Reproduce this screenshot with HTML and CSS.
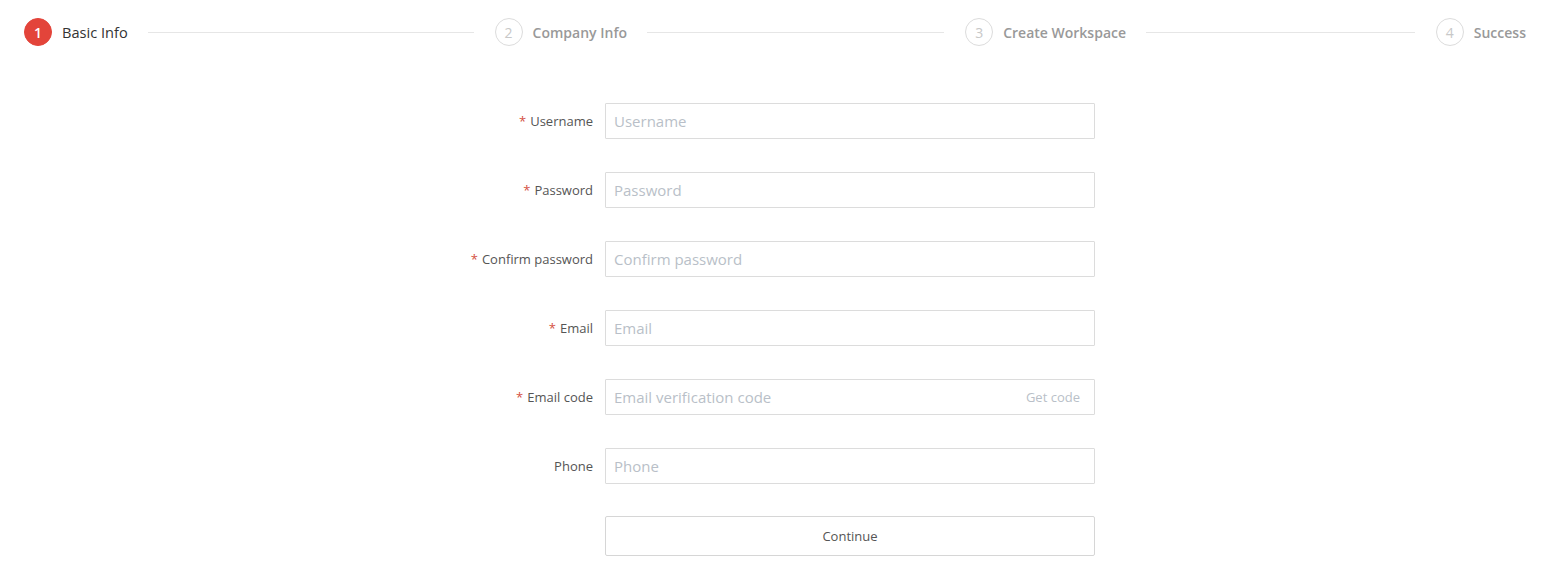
FILE: index.html
```html
<!DOCTYPE html>
<html>
<head>
<meta charset="utf-8">
<link rel="stylesheet" href="styles.css">
</head>
<body>
<div class="steps">
  <div class="step active">
    <span class="step-icon">1</span>
    <span class="step-title">Basic Info</span>
    <span class="step-line"></span>
  </div>
  <div class="step">
    <span class="step-icon">2</span>
    <span class="step-title">Company Info</span>
    <span class="step-line"></span>
  </div>
  <div class="step">
    <span class="step-icon">3</span>
    <span class="step-title">Create Workspace</span>
    <span class="step-line"></span>
  </div>
  <div class="step last">
    <span class="step-icon">4</span>
    <span class="step-title">Success</span>
  </div>
</div>

<form class="form">
  <label class="label"><span class="req">*</span>Username</label>
  <div class="field"><input class="input" placeholder="Username"></div>

  <label class="label"><span class="req">*</span>Password</label>
  <div class="field"><input class="input" type="password" placeholder="Password"></div>

  <label class="label"><span class="req">*</span>Confirm password</label>
  <div class="field"><input class="input" type="password" placeholder="Confirm password"></div>

  <label class="label"><span class="req">*</span>Email</label>
  <div class="field"><input class="input" placeholder="Email"></div>

  <label class="label"><span class="req">*</span>Email code</label>
  <div class="field code-field"><input class="input" placeholder="Email verification code"><span class="get-code">Get code</span></div>

  <label class="label">Phone</label>
  <div class="field"><input class="input" placeholder="Phone"></div>

  <span class="label"></span>
  <div class="field btn-field"><button type="button" class="btn">Continue</button></div>
</form>
</body>
</html>
```

FILE: styles.css
```css
* { box-sizing: border-box; }
html, body { margin: 0; padding: 0; background: #fff; }
body {
  font-family: "Open Sans", "Noto Sans", sans-serif;
  color: #555;
}

.steps {
  display: flex;
  align-items: center;
  padding: 18px 30px 0 24px;
  height: 46px;
}
.step {
  flex: 1;
  display: flex;
  align-items: center;
  min-width: 0;
}
.step.last { flex: none; }
.step-icon {
  width: 28px;
  height: 28px;
  border-radius: 50%;
  border: 1px solid #dcdcdc;
  color: #c8c8c8;
  font-size: 14px;
  display: flex;
  align-items: center;
  justify-content: center;
  flex: none;
}
.step.active .step-icon {
  background: #e3443a;
  border-color: #e3443a;
  color: #fff;
  font-weight: 600;
}
.step-title {
  margin-left: 10px;
  font-size: 14px;
  color: #999;
  white-space: nowrap;
  font-weight: 600;
}
.step.active .step-title { color: #333; font-weight: 400; font-size: 14.6px; }
.step-line {
  flex: 1;
  height: 1px;
  background: #e6e6e6;
  margin: 0 21px 0 20px;
}

.form {
  width: 634px;
  margin: 57px auto 0;
  display: grid;
  grid-template-columns: 132px 490px;
  column-gap: 12px;
  row-gap: 33px;
  align-items: center;
}
.label {
  text-align: right;
  font-size: 13px;
  color: #555;
  white-space: nowrap;
}
.req {
  color: #d4503f;
  margin-right: 4px;
}
.field {
  position: relative;
  height: 36px;
}
.input {
  width: 100%;
  height: 36px;
  border: 1px solid #dcdcdc;
  border-radius: 1px;
  padding: 0 8px;
  font-family: inherit;
  font-size: 15px;
  color: #333;
  outline: none;
}
.input::placeholder { color: #b9bfc8; }
.code-field .input { padding-right: 80px; }
.get-code {
  position: absolute;
  right: 15px;
  top: 0;
  line-height: 36px;
  font-size: 13px;
  color: #b9bfc8;
}
.btn-field { height: 40px; margin-top: -1px; }
.btn {
  width: 100%;
  height: 40px;
  border: 1px solid #d6d6d6;
  border-radius: 2px;
  background: #fff;
  font-family: inherit;
  font-size: 13px;
  color: #555;
}
```
